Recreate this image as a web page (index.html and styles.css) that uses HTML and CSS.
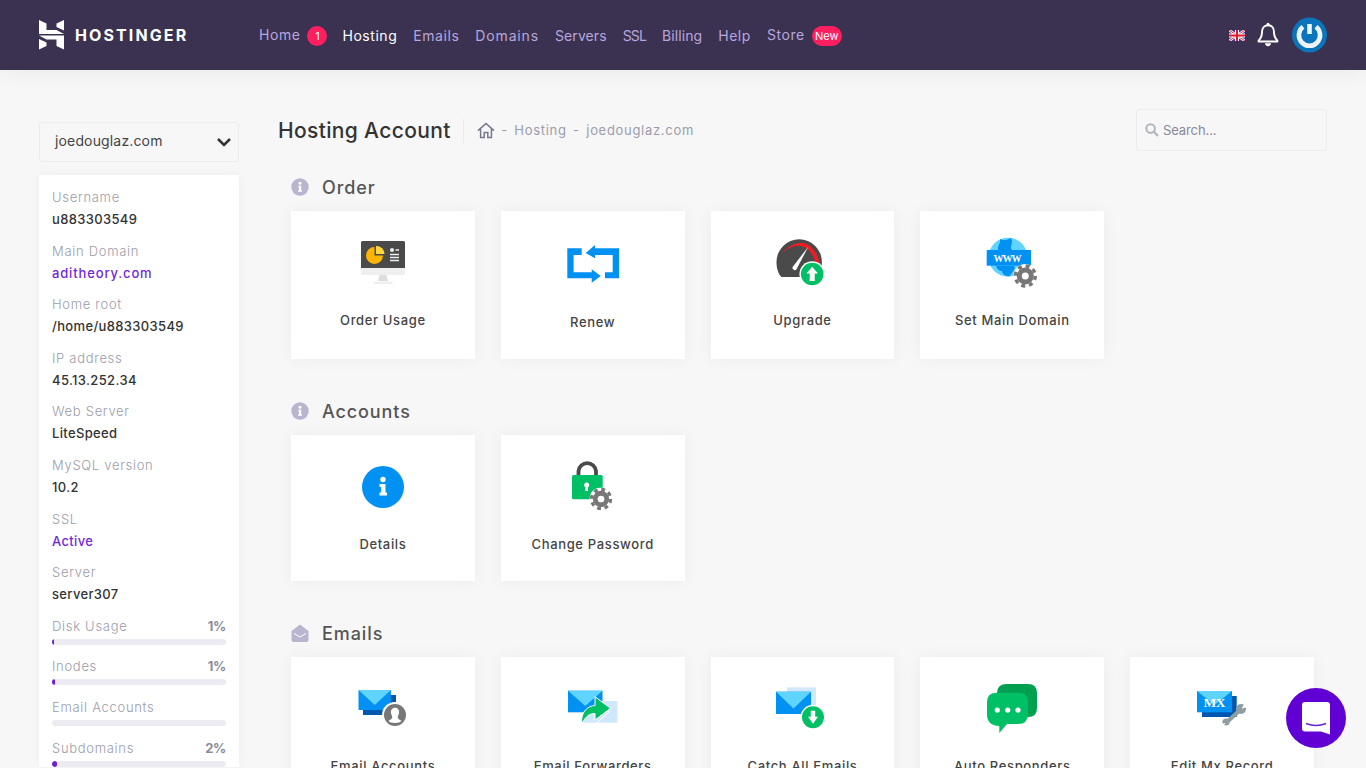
FILE: index.html
```html
<!DOCTYPE html>
<html>
<head>
  <meta charset="UTF-8">
  <meta name="viewport" content="width=device-width, initial-scale=1.0">
  <title>Hosting Account</title>
  <link rel="stylesheet" href="styles.css">
</head>
<body>

  <svg class="defs" width="0" height="0">
    <symbol id="gear" viewBox="0 0 24 24">
      <circle cx="12" cy="12" r="12" fill="#fff"/>
      <circle cx="12" cy="12" r="10" fill="none" stroke="#777" stroke-width="3.4" stroke-dasharray="4 3.85"/>
      <circle cx="12" cy="12" r="6" fill="none" stroke="#777" stroke-width="5"/>
    </symbol>
    <symbol id="info" viewBox="0 0 18 18">
      <circle cx="9" cy="9" r="8.7" fill="#b9b5cf"/>
      <circle cx="9" cy="5.2" r="1.5" fill="#fff"/>
      <path d="M7.2 7.7H10.2V12.2H11V13.8H7.1V12.2H8V9.3H7.2Z" fill="#fff"/>
    </symbol>
  </svg>

  <header class="topbar">
    <a class="logo">
      <svg class="logo-mark" width="25" height="30" viewBox="0 0 25 30">
        <path fill="#fff" d="M0 0L7.5 3.4V10H17.5L25 14H0Z"/>
        <path fill="#fff" d="M17.5 3.4L25 0V10.6L17.5 7Z"/>
        <path fill="#fff" d="M25 29.5L17.5 26.1V19.5H7.5L0 15.5H25Z"/>
        <path fill="#fff" d="M7.5 26.1L0 29.5V18.9L7.5 22.5Z"/>
      </svg>
      <span class="logo-text">HOSTINGER</span>
    </a>
    <nav class="nav">
      <a class="nav-link nav-raised">Home <span class="count">1</span></a>
      <a class="nav-link active">Hosting</a>
      <a class="nav-link">Emails</a>
      <a class="nav-link nav-wide">Domains</a>
      <a class="nav-link nav-tight">Servers</a>
      <a class="nav-link nav-ssl">SSL</a>
      <a class="nav-link nav-tight">Billing</a>
      <a class="nav-link">Help</a>
      <a class="nav-link nav-raised">Store <span class="count count-new">New</span></a>
    </nav>
    <div class="topbar-right">
      <svg class="flag" width="16" height="11" viewBox="0 0 16 11">
        <rect width="16" height="11" fill="#3c3f9c"/>
        <path d="M0 0L16 11M16 0L0 11" stroke="#fff" stroke-width="2.4"/>
        <path d="M0 0L16 11M16 0L0 11" stroke="#e0283c" stroke-width="1"/>
        <path d="M8 0V11M0 5.5H16" stroke="#fff" stroke-width="4"/>
        <path d="M8 0V11M0 5.5H16" stroke="#e0182c" stroke-width="2"/>
      </svg>
      <svg class="bell" width="22" height="25" viewBox="0 0 22 25">
        <path d="M11 3.2C6.8 3.2 5 6.6 5 10.2C5 14.5 3.6 16.6 1.6 18.6V19.5H20.4V18.6C18.4 16.6 17 14.5 17 10.2C17 6.6 15.2 3.2 11 3.2Z" fill="none" stroke="#fff" stroke-width="1.9" stroke-linejoin="round"/>
        <circle cx="11" cy="2.2" r="1.5" fill="#fff"/>
        <path d="M8 21.3H14C14 23 12.7 24.2 11 24.2S8 23 8 21.3Z" fill="#fff"/>
      </svg>
      <svg class="avatar" width="35" height="36" viewBox="0 0 35 36">
        <circle cx="17.5" cy="18" r="17.5" fill="#0a75bb"/>
        <path d="M11 9.8A10.6 10.6 0 1 0 24 9.8" fill="none" stroke="#eef5fa" stroke-width="4.6"/>
        <path d="M17.5 7V17" stroke="#eef5fa" stroke-width="4.6"/>
      </svg>
    </div>
  </header>

  <div class="page">
    <aside class="sidebar">
      <div class="domain-select">
        <span>joedouglaz.com</span>
        <svg width="16" height="10" viewBox="0 0 16 10"><path d="M2 2L8 8L14 2" fill="none" stroke="#333" stroke-width="2.6"/></svg>
      </div>
      <div class="info-card">
        <div class="info-row"><div class="info-label">Username</div><div class="info-value">u883303549</div></div>
        <div class="info-row"><div class="info-label">Main Domain</div><div class="info-value purple domain-link">aditheory.com</div></div>
        <div class="info-row"><div class="info-label">Home root</div><div class="info-value">/home/u883303549</div></div>
        <div class="info-row"><div class="info-label">IP address</div><div class="info-value">45.13.252.34</div></div>
        <div class="info-row"><div class="info-label">Web Server</div><div class="info-value">LiteSpeed</div></div>
        <div class="info-row"><div class="info-label">MySQL version</div><div class="info-value">10.2</div></div>
        <div class="info-row"><div class="info-label">SSL</div><div class="info-value purple">Active</div></div>
        <div class="info-row"><div class="info-label">Server</div><div class="info-value">server307</div></div>

        <div class="usage">
          <div class="usage-head"><span class="info-label">Disk Usage</span><b>1%</b></div>
          <div class="bar"><div class="bar-fill" style="width: 1%"></div></div>
        </div>
        <div class="usage">
          <div class="usage-head"><span class="info-label">Inodes</span><b>1%</b></div>
          <div class="bar"><div class="bar-fill" style="width: 2%"></div></div>
        </div>
        <div class="usage">
          <div class="usage-head"><span class="info-label">Email Accounts</span></div>
          <div class="bar"></div>
        </div>
        <div class="usage">
          <div class="usage-head"><span class="info-label">Subdomains</span><b>2%</b></div>
          <div class="bar"><div class="bar-fill" style="width: 3%"></div></div>
        </div>
      </div>
    </aside>

    <main class="content">
      <div class="page-head">
        <h1>Hosting Account</h1>
        <div class="crumbs">
          <svg width="18" height="17" viewBox="0 0 18 17">
            <path d="M1 8.6L9 1.4L17 8.6M3.6 7V15.6H7.2V10.6H10.8V15.6H14.4V7" fill="none" stroke="#77778c" stroke-width="1.5"/>
          </svg>
          <span>-</span><span>Hosting</span><span>-</span><span>joedouglaz.com</span>
        </div>
        <div class="search">
          <svg width="14" height="14" viewBox="0 0 14 14">
            <circle cx="5.6" cy="5.6" r="4.3" fill="none" stroke="#b4b4bf" stroke-width="2"/>
            <path d="M8.8 8.8L13 13" stroke="#b4b4bf" stroke-width="2.2"/>
          </svg>
          <span>Search...</span>
        </div>
      </div>

      <section class="section">
        <h2><svg width="18" height="18"><use href="#info"/></svg>Order</h2>
        <div class="tiles">
          <a class="tile">
            <svg class="tile-icon" width="64" height="56" viewBox="0 0 64 56">
              <path d="M10 7.5Q10 6 11.5 6H52.5Q54 6 54 7.5V33H10Z" fill="#4a4a4a"/>
              <path d="M10 33H54V38.5Q54 40 52.5 40H11.5Q10 40 10 38.5Z" fill="#efefef"/>
              <path d="M28.5 40H35.5L37 46H27Z" fill="#ddd"/>
              <path d="M23 46.5H41L42 49H22Z" fill="#efefef"/>
              <path d="M23.5 12A8.5 8.5 0 1 0 32 20.5H23.5Z" fill="#ffb400"/>
              <path d="M25 11H26A8 8 0 0 1 33.5 19H25Z" fill="#ffd83b"/>
              <circle cx="41" cy="15" r="2" fill="#eee"/>
              <path d="M44.5 15H48M39 19.6H48M39 22.4H48M39 25.4H48" stroke="#eee" stroke-width="1.5"/>
            </svg>
            <span>Order Usage</span>
          </a>
          <a class="tile tile-low">
            <svg class="tile-icon" width="64" height="56" viewBox="0 0 64 56">
              <path fill="#0091f2" d="M6.3 13.3H20.7V20H12.6V37.3H30.7V34.3L39.7 41L30.7 47.7V43.3H6.3Z"/>
              <path fill="#0091f2" d="M58 43.3H44V37.3H51.7V20H34V23.3L24.7 18L34 10V13.3H58Z"/>
            </svg>
            <span>Renew</span>
          </a>
          <a class="tile">
            <svg class="tile-icon" width="64" height="56" viewBox="0 0 64 56">
              <g transform="translate(0.5 0)">
                <path d="M11 42C8 39 6 34 6 27A22.7 22.7 0 0 1 51.4 27C51.4 34 49 39 46 42Z" fill="#4a4a4a"/>
                <path d="M11.500 18C19 9 29 7 33.500 8C41 10 47 18 49 28H45C43 20 38 12 30 11C24 10 18 13 11.500 18Z" fill="#ee1c25"/>
                <path d="M37.800 11.700L26 34.200A2.200 2.200 0 0 1 22.500 31.500Z" fill="#fff"/>
                <circle cx="41.700" cy="39" r="12.800" fill="#fff"/>
                <circle cx="41.700" cy="39" r="11.300" fill="#00c066"/>
                <path d="M41.700 31.800L47.500 38.500H44.200V46H39.200V38.500H35.900Z" fill="#fff"/>
              </g>
            </svg>
            <span>Upgrade</span>
          </a>
          <a class="tile">
            <svg class="tile-icon" width="64" height="56" viewBox="0 0 64 56">
              <circle cx="28" cy="22.300" r="19.500" fill="#5fd4ff"/>
              <path d="M20 4C24 6 27 5 31 3C34 8 29 12 32 15H18C17 11 21 9 20 4ZM16 31H34C37 34 31 38 30 41C25 42 22 38 22 36C19 36 17 34 16 31Z" fill="#0091f2"/>
              <rect x="6.700" y="15" width="44.300" height="15.700" fill="#0091f2"/>
              <text class="www" x="13.500" y="27" textLength="28">WWW</text>
              <use href="#gear" x="33.300" y="29" width="24" height="24"/>
            </svg>
            <span>Set Main Domain</span>
          </a>
        </div>
      </section>

      <section class="section">
        <h2><svg width="18" height="18"><use href="#info"/></svg>Accounts</h2>
        <div class="tiles">
          <a class="tile">
            <svg class="tile-icon" width="64" height="56" viewBox="0 0 64 56">
              <circle cx="32" cy="28" r="21" fill="#0091f2"/>
              <circle cx="32" cy="20.500" r="2.700" fill="#fff"/>
              <path d="M28.500 25H34.500V33.500H36V36.500H28.500V33.500H30V28H28.500Z" fill="#fff"/>
            </svg>
            <span>Details</span>
          </a>
          <a class="tile">
            <svg class="tile-icon" width="64" height="56" viewBox="0 0 64 56">
              <path d="M17.500 17V12A8.800 8.800 0 0 1 35 12V17" fill="none" stroke="#4a4a4a" stroke-width="3.800"/>
              <rect x="11" y="16" width="30.700" height="24.300" rx="1.500" fill="#00c066"/>
              <circle cx="25.700" cy="26" r="2.500" fill="#fff"/>
              <path d="M24.800 27H26.600L27.200 32H24.200Z" fill="#fff"/>
              <use href="#gear" x="28.500" y="28.500" width="23" height="23"/>
            </svg>
            <span>Change Password</span>
          </a>
        </div>
      </section>

      <section class="section">
        <h2>
          <svg width="18" height="18" viewBox="0 0 18 18">
            <path d="M0.500 7L9 0.500L17.500 7V16Q17.500 18 15.500 18H2.500Q0.500 18 0.500 16Z" fill="#b9b5cf"/>
            <path d="M3 9.500L9 13L15 9.500" fill="none" stroke="#fff" stroke-width="1"/>
          </svg>Emails
        </h2>
        <div class="tiles">
          <a class="tile">
            <svg class="tile-icon" width="64" height="56" viewBox="0 0 64 56">
              <rect x="12" y="14" width="33" height="20" fill="#0058ae"/>
              <rect x="7.500" y="9" width="32.400" height="20" fill="#0091f2"/>
              <path d="M7.500 9H39.900L23.700 24Z" fill="#5fd4ff"/>
              <circle cx="44" cy="34" r="13" fill="#fff"/>
              <circle cx="44" cy="34" r="11" fill="#777"/>
              <path d="M44 26.700C47 26.700 48.500 29.200 48 32.200C47.600 34.200 46.500 35.200 46.800 36.700C47.300 38.200 49 38.900 50.500 39.700C49 42.700 39 42.700 37.500 39.700C39 38.900 40.700 38.200 41.200 36.700C41.500 35.200 40.400 34.200 40 32.200C39.500 29.200 41 26.700 44 26.700Z" fill="#fff"/>
            </svg>
            <span>Email Accounts</span>
          </a>
          <a class="tile">
            <svg class="tile-icon" width="64" height="56" viewBox="0 0 64 56">
              <rect x="7" y="9.700" width="34.500" height="21.600" fill="#0091f2"/>
              <path d="M7 9.700H41.500L24.200 25Z" fill="#5fd4ff"/>
              <path d="M22 31H35V41.700H22ZM35 20H56.500V41.700H35Z" fill="#cfe8fc"/>
              <path d="M35 20L48 31L36 41.700" fill="none" stroke="#fff" stroke-width="1"/>
              <path d="M20.500 41C20.500 30 27 25 34 24.500V15.700L49.500 27.300L34 39V32.500C29 32.500 25 35 21.900 41Z" fill="#00c066" stroke="#fff" stroke-width="1"/>
            </svg>
            <span>Email Forwarders</span>
          </a>
          <a class="tile">
            <svg class="tile-icon" width="64" height="56" viewBox="0 0 64 56">
              <rect x="17" y="6.300" width="29" height="22.700" fill="#cfe8fc"/>
              <rect x="6" y="10.700" width="35" height="22.300" fill="#0091f2"/>
              <path d="M6 10.700H41L23.500 27.500Z" fill="#5fd4ff"/>
              <circle cx="43" cy="36.300" r="12.500" fill="#fff"/>
              <circle cx="43" cy="36.300" r="11" fill="#00c066"/>
              <path d="M40.800 29.800H45.200V35.800H48L43 42.800L38 35.800H40.800Z" fill="#fff"/>
            </svg>
            <span>Catch All Emails</span>
          </a>
          <a class="tile">
            <svg class="tile-icon" width="64" height="56" viewBox="0 0 64 56">
              <path d="M27 3H48Q57 3 57 12V27Q57 36 48 36H27Q17 36 17 27V12Q17 3 27 3Z" fill="#00a050"/>
              <path d="M17 11.700H38Q48 11.700 48 21V33Q48 43 38 43H27L19.300 52V45C12 45 7 41 7 34V21Q7 11.700 17 11.700Z" fill="#00c066"/>
              <circle cx="17.300" cy="29" r="2.600" fill="#fff"/>
              <circle cx="27.700" cy="29" r="2.600" fill="#fff"/>
              <circle cx="38" cy="29" r="2.600" fill="#fff"/>
            </svg>
            <span>Auto Responders</span>
          </a>
          <a class="tile">
            <svg class="tile-icon" width="64" height="56" viewBox="0 0 64 56">
              <rect x="12" y="15" width="34.700" height="21" fill="#0058ae"/>
              <rect x="7" y="10" width="35" height="21.300" fill="#0091f2"/>
              <path d="M7 10H42L24.500 24Z" fill="#5fd4ff"/>
              <text class="mx" x="24.500" y="26" text-anchor="middle">MX</text>
              <path d="M37 41L50 29" stroke="#8e9ea0" stroke-width="4"/>
              <circle cx="36" cy="41" r="3.600" fill="#8e9ea0"/>
              <circle cx="51" cy="28" r="5" fill="#8e9ea0"/>
              <path d="M51.500 27.500L55 22L58 26Z" fill="#fff"/>
              <path d="M35.500 42L33 46L31 43Z" fill="#fff"/>
            </svg>
            <span>Edit Mx Record</span>
          </a>
        </div>
      </section>
    </main>
  </div>

  <a class="chat">
    <svg width="28" height="33" viewBox="0 0 28 33">
      <path d="M3 0H25Q28 0 28 3V32.500L19 29.500H3Q0 29.500 0 26.500V3Q0 0 3 0Z" fill="#fff"/>
      <path d="M4 21.500Q14 25.500 24 21.500" fill="none" stroke="#6a22d8" stroke-width="1.700"/>
    </svg>
  </a>

</body>
</html>
```

FILE: styles.css
```css
html, body {
    height: 100%;
    overflow: hidden;
}

body {
    margin: 0;
    background: #f7f7f8;
    color: #333;
    font-family: "Inter", "Open Sans", sans-serif;
    font-size: 13px;
}

a {
    color: inherit;
    text-decoration: none;
}

.defs {
    position: absolute;
}

/* top bar */
.topbar {
    height: 70px;
    background: #3a3250;
    box-shadow: 0 2px 20px rgba(0, 0, 0, 0.06);
    display: flex;
    align-items: center;
    padding: 0 39px;
    box-sizing: border-box;
}

.logo {
    width: 220px;
    display: flex;
    align-items: center;
    gap: 11px;
    color: #fff;
}

.logo-text {
    font-size: 16px;
    font-weight: 700;
    letter-spacing: 2.1px;
}

.nav {
    display: flex;
    align-items: center;
    gap: 16px;
    margin-top: 1px;
    color: #b9a6df;
    font-size: 14px;
    letter-spacing: 0.55px;
}

.nav-link {
    display: flex;
    align-items: center;
    gap: 6px;
    line-height: 20px;
}

.nav-link.active {
    color: #fff;
}

.nav-raised {
    margin-top: -2px;
}

.nav-wide {
    letter-spacing: 0.85px;
}

.nav-tight {
    letter-spacing: 0.1px;
}

.nav-ssl {
    letter-spacing: -0.9px;
}

.count {
    min-width: 20px;
    height: 20px;
    margin: 3px -1px 0 1px;
    border-radius: 10px;
    background: #ff1f5f;
    color: #fff;
    font-size: 11px;
    line-height: 20px;
    text-align: center;
    letter-spacing: 0;
}

.count-new {
    width: 30px;
}

.topbar-right {
    margin-left: auto;
    display: flex;
    align-items: center;
    gap: 13px;
}

.flag {
    margin-right: -1px;
}

.bell {
    margin-top: -1px;
}

/* page */
.page {
    display: flex;
    gap: 39px;
    padding: 0 39px;
}

.sidebar {
    width: 200px;
    flex-shrink: 0;
    padding-top: 52px;
}

.domain-select {
    height: 40px;
    box-sizing: border-box;
    border: 1px solid #ebebf0;
    border-radius: 3px;
    margin-bottom: 13px;
    padding: 0 6px 3px 15px;
    display: flex;
    align-items: center;
    justify-content: space-between;
    font-size: 14px;
    color: #444;
    letter-spacing: 0.15px;
}

.domain-select svg {
    margin-top: 3px;
}

.info-card {
    background: #fff;
    box-shadow: 0 0 12px rgba(0, 0, 0, 0.04);
    padding: 12px 13px 0;
}

.info-row {
    margin-bottom: 11.6px;
}

.info-label {
    color: #9c9cab;
    font-weight: 300;
    line-height: 20px;
    letter-spacing: 0.7px;
}

.info-row .info-label {
    margin-bottom: 2px;
}

.info-value {
    line-height: 20px;
    font-weight: 500;
    letter-spacing: 0.35px;
}

.purple {
    color: #7128d8;
}

.domain-link {
    letter-spacing: 0.85px;
}

.usage {
    margin-bottom: 11.7px;
}

.usage-head {
    display: flex;
    justify-content: space-between;
    height: 20px;
    margin-bottom: 3px;
    line-height: 20px;
}

.usage-head b {
    color: #8c8c9a;
    font-weight: 700;
    letter-spacing: -0.3px;
}

.bar {
    height: 6px;
    border-radius: 3px;
    background: #ebebf1;
    overflow: hidden;
}

.bar-fill {
    height: 100%;
    background: #6b1fd6;
    border-radius: 3px;
}

/* main column */
.content {
    flex: 1;
    min-width: 0;
    padding-top: 39px;
}

.page-head {
    height: 42px;
    margin-bottom: 24px;
    display: flex;
    align-items: center;
}

.page-head h1 {
    margin: 1px 0 0;
    padding-right: 12px;
    border-right: 1px solid #ebebee;
    font-size: 21px;
    font-weight: 500;
    line-height: 24px;
    color: #333;
    letter-spacing: 0.35px;
}

.crumbs {
    display: flex;
    align-items: center;
    gap: 6.5px;
    margin-left: 13px;
    color: #9c9cab;
    letter-spacing: 0.7px;
}

.search {
    width: 191px;
    height: 42px;
    margin-left: auto;
    box-sizing: border-box;
    border: 1px solid #ebebf0;
    border-radius: 3px;
    padding-left: 8px;
    display: flex;
    align-items: center;
    gap: 4px;
    color: #88889a;
    letter-spacing: -0.1px;
}

.section {
    padding: 0 13px;
    margin-bottom: 40px;
}

.section h2 {
    height: 24px;
    margin: 0 0 12px;
    display: flex;
    align-items: center;
    gap: 13px;
    font-size: 18px;
    font-weight: 500;
    color: #555;
    letter-spacing: 0.9px;
}

.tiles {
    display: grid;
    grid-template-columns: repeat(5, 1fr);
    gap: 26px;
}

.tile {
    background: #fff;
    box-shadow: 0 0 16px rgba(0, 0, 0, 0.05);
    padding: 24px 0 27px;
    display: flex;
    flex-direction: column;
    align-items: center;
    font-weight: 500;
    color: #444;
    letter-spacing: 0.65px;
}

.tile span {
    display: block;
    line-height: 20px;
    margin-top: 19px;
}

.tile-low span {
    margin-top: 21px;
}

.tile-icon {
    display: block;
}

.www, .mx {
    font-family: "Liberation Serif", serif;
    font-weight: 700;
    fill: #fff;
    letter-spacing: 0;
}

.www {
    font-size: 10px;
}

.mx {
    font-size: 13px;
}

/* chat bubble, over the page */
.chat {
    position: fixed;
    right: 20px;
    bottom: 20px;
    width: 60px;
    height: 60px;
    border-radius: 50%;
    background: #6100d4;
    display: flex;
    align-items: center;
    justify-content: center;
}
```
